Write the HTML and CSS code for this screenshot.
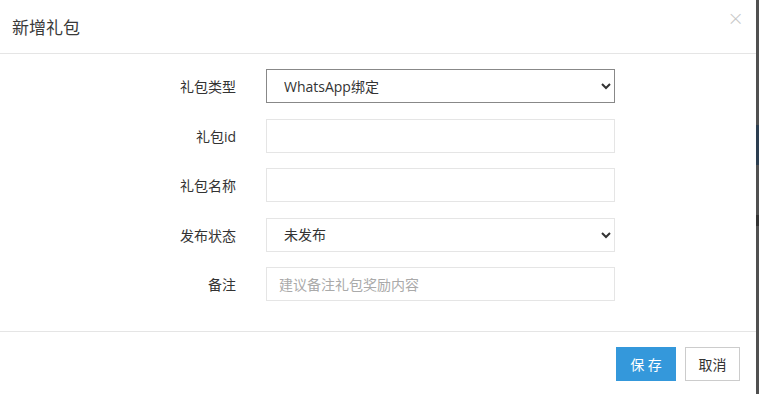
FILE: index.html
```html
<!DOCTYPE html>
<html lang="zh-CN">
<head>
    <meta charset="UTF-8">
    <title>新增礼包</title>
    <link rel="stylesheet" href="styles.css">
</head>
<body>
    <div class="modal">
        <div class="modal-header">
            <h4>新增礼包</h4>
            <span class="close">&times;</span>
        </div>
        <form class="modal-body">
            <div class="form-group">
                <label>礼包类型</label>
                <select class="first">
                    <option>WhatsApp绑定</option>
                </select>
            </div>
            <div class="form-group">
                <label>礼包id</label>
                <input type="text">
            </div>
            <div class="form-group">
                <label>礼包名称</label>
                <input type="text">
            </div>
            <div class="form-group">
                <label>发布状态</label>
                <select>
                    <option>未发布</option>
                </select>
            </div>
            <div class="form-group">
                <label>备注</label>
                <input type="text" placeholder="建议备注礼包奖励内容">
            </div>
        </form>
        <div class="modal-footer">
            <button class="btn-save">保 存</button>
            <button class="btn-cancel">取消</button>
        </div>
    </div>
</body>
</html>
```

FILE: styles.css
```css
body {
    margin: 0;
    font-family: "Open Sans", "Noto Sans CJK SC", sans-serif;
    font-size: 14px;
    color: #333;
    background: linear-gradient(to bottom, #505050 0, #505050 125px, #2c3e50 125px, #2c3e50 165px, #505050 165px, #505050 215px, #333 215px, #333 226px, #505050 226px);
    height: 394px;
    overflow: hidden;
}

.modal {
    width: 756px;
    height: 394px;
    background: #fff;
}

.modal-header {
    height: 53px;
    border-bottom: 1px solid #e5e5e5;
    display: flex;
    align-items: center;
    justify-content: space-between;
    padding: 0 12px 0 12px;
}

.modal-header h4 {
    margin: 0;
    font-size: 17px;
    font-weight: normal;
    color: #3a3a3a;
}

.close {
    color: #c8c8c8;
    font-size: 20px;
    font-family: "DejaVu Sans", sans-serif;
    font-weight: 300;
    align-self: flex-start;
    margin-top: 6px;
}

.modal-body {
    margin: 0;
    padding: 15px 0 30px;
    border-bottom: 1px solid #e5e5e5;
}

.form-group {
    display: grid;
    grid-template-columns: 236px 349px;
    column-gap: 30px;
    align-items: center;
    margin-bottom: 15.5px;
}

.form-group:last-child {
    margin-bottom: 0;
}

label {
    text-align: right;
    font-size: 14px;
    color: #333;
}

input[type="text"],
select {
    box-sizing: border-box;
    height: 34px;
    width: 349px;
    margin: 0;
    padding: 0 12px;
    border: 1px solid #e5e5e5;
    border-radius: 0;
    background: #fff;
    font-family: inherit;
    font-size: 14px;
    color: #333;
    outline: none;
}

select {
    padding-left: 13px;
}

select.first {
    border-color: #888;
}

input::placeholder {
    color: #aaa;
}

.modal-footer {
    display: flex;
    justify-content: flex-end;
    gap: 9px;
    padding: 15px 16px;
}

.modal-footer button {
    height: 34px;
    font-family: inherit;
    font-size: 14px;
    border-radius: 0;
    cursor: pointer;
}

.btn-save {
    width: 60px;
    background: #3498db;
    border: 1px solid #3498db;
    color: #fff;
}

.btn-cancel {
    width: 55px;
    background: #fff;
    border: 1px solid #ccc;
    color: #333;
}
```
